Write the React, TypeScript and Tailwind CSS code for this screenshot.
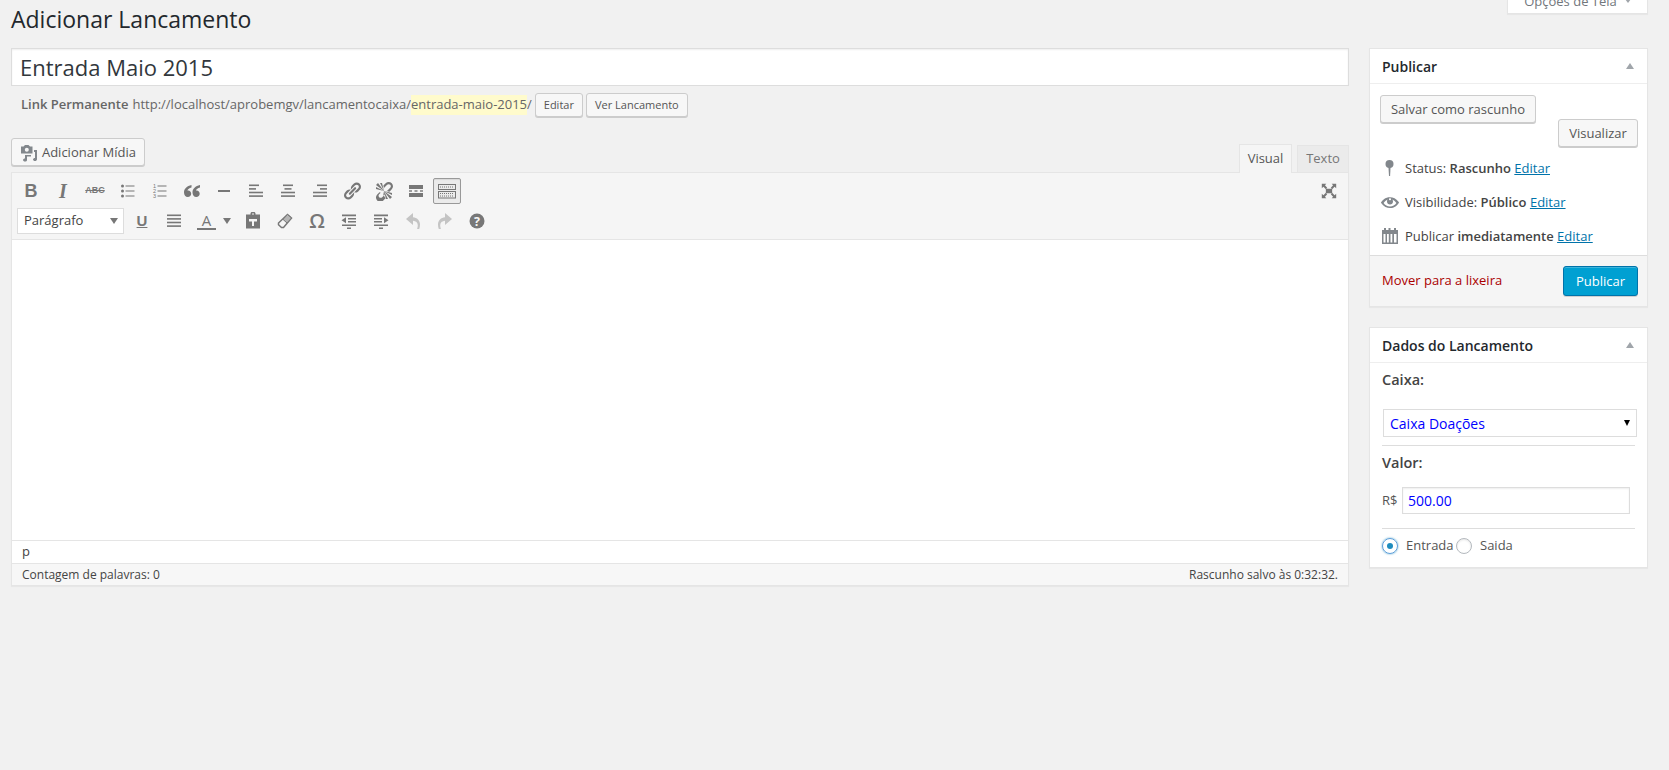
import React from "react";

const C = "#777";

function Svg({ children, s = 20 }: { children: React.ReactNode; s?: number }) {
  return (
    <svg width={s} height={s} viewBox="0 0 20 20" fill={C}>
      {children}
    </svg>
  );
}

function Btn({ children, w = "w-8" }: { children: React.ReactNode; w?: string }) {
  return <div className={`${w} h-[28px] flex items-center justify-center shrink-0 text-[#777]`}>{children}</div>;
}

function Lines({ rows }: { rows: [number, number][] }) {
  return (
    <Svg>
      {rows.map(([x, w], i) => (
        <rect key={i} x={x} y={3.5 + i * 3.6} width={w} height="1.6" />
      ))}
    </Svg>
  );
}

const Ul = () => (
  <Svg>
    {[5, 10, 15].map((y) => (
      <g key={y}>
        <circle cx="4.5" cy={y} r="1.5" />
        <rect x="7.5" y={y - 0.5} width="9" height="1" />
      </g>
    ))}
  </Svg>
);

const Ol = () => (
  <Svg>
    {[1, 2, 3].map((n, i) => (
      <g key={n}>
        <text x="3" y={6.5 + i * 5} fontSize="5.5" fontFamily="Liberation Sans" fill={C}>
          {n}
        </text>
        <rect x="7.5" y={4.5 + i * 5} width="9" height="1" />
      </g>
    ))}
  </Svg>
);

const Quote = () => (
  <Svg>
    <path d="M9.500 4C5 5 2 7.500 2 11.500 2 14 3.500 16 5.800 16c2 0 3.400-1.400 3.400-3.300 0-1.900-1.300-3.200-3-3.200-.3 0-.5 0-.8.100.5-1.400 1.900-2.400 4.100-3z" />
    <path d="M18 4c-4.500 1-7.500 3.500-7.500 7.500 0 2.500 1.500 4.500 3.800 4.500 2 0 3.400-1.400 3.400-3.300 0-1.900-1.300-3.200-3-3.200-.3 0-.5 0-.8.100.5-1.400 1.900-2.400 4.100-3z" />
  </Svg>
);

const LinkIcon = () => (
  <Svg>
    <path d="M17.740 2.760c1.680 1.690 1.680 4.410 0 6.100l-1.530 1.520c-1.120 1.120-2.700 1.470-4.140 1.090l2.620-2.610.76-.77.76-.76c.84-.84.84-2.200 0-3.040-.84-.85-2.200-.85-3.040 0l-.77.76-3.380 3.380c-.37-1.440-.02-3.020 1.100-4.140l1.520-1.530c1.690-1.680 4.420-1.680 6.100 0zM8.590 13.430l5.340-5.340c.42-.42.42-1.100 0-1.520-.44-.43-1.130-.39-1.530 0l-5.330 5.340c-.42.42-.42 1.100 0 1.520.39.39 1.100.43 1.520 0zm-.76 2.290l4.140-4.150c.38 1.440.03 3.020-1.090 4.140l-1.520 1.530c-1.690 1.680-4.410 1.680-6.100 0-1.680-1.680-1.680-4.420 0-6.100l1.530-1.520c1.120-1.120 2.700-1.470 4.140-1.100l-4.140 4.150c-.85.84-.85 2.200 0 3.050.84.84 2.200.84 3.040 0z" />
  </Svg>
);

const UnlinkIcon = () => (
  <Svg>
    <path d="M17.740 2.260c1.680 1.690 1.680 4.410 0 6.100l-1.530 1.520c-.32.33-.69.58-1.080.77L13 10l1.690-1.640.76-.77.76-.76c.84-.84.84-2.200 0-3.040-.84-.85-2.200-.85-3.040 0l-.77.76-.76.76L10 7l-.65-2.140c.19-.38.45-.75.77-1.070l1.520-1.530c1.690-1.680 4.420-1.680 6.100 0zM2 4l8 6-6-8zm4-2l4 8-2-8H6zM2 6l8 4-8-2V6zm7.360 7.690L10 10l.71 3.640-.21.27-.76.76-.76.76-.77.77c-.84.84-2.200.84-3.040 0s-.84-2.200 0-3.050l.76-.76.76-.76L7.330 12l-1.830-.64c-.27.18-.53.39-.76.62l-1.530 1.520c-1.680 1.690-1.680 4.420 0 6.100 1.690 1.680 4.410 1.680 6.100 0l1.530-1.530c.23-.23.44-.49.62-.76zM18 14l-8-4 8 2v2zm-4 4l-4-8 2 8h2zm4-2l-8-6 6 8z" />
  </Svg>
);

const More = () => (
  <Svg>
    <rect x="3" y="4" width="14" height="4" />
    <rect x="3" y="9.300" width="3" height="1.400" />
    <rect x="8.500" y="9.300" width="3" height="1.400" />
    <rect x="14" y="9.300" width="3" height="1.400" />
    <rect x="3" y="12" width="14" height="4" />
  </Svg>
);

const Sink = () => (
  <svg width="20" height="20" viewBox="0 0 20 20" fill="none" stroke={C}>
    <rect x="1.500" y="3.500" width="17" height="5" />
    <rect x="1.500" y="10.500" width="17" height="6.500" />
    <path d="M3 6h14M3 12.500h14M3 15h14" strokeDasharray="1 1" strokeWidth="1.200" />
  </svg>
);

const Paste = () => (
  <Svg>
    <path d="M7.500 3.500V2.500C7.500 1.700 8.200 1 9 1h2c.8 0 1.500.7 1.500 1.500v1H17v14H3v-14zM9 2.500v1h2v-1zM6 8v2.500h3V15h2v-4.500h3V8z" fillRule="evenodd" />
  </Svg>
);

const Eraser = () => (
  <svg width="20" height="20" viewBox="0 0 20 20" fill="none" stroke={C} strokeWidth="1.500">
    <path d="M12.500 3.500l4 3.500-8 9.500H6.500l-3-2.800V12z" />
    <path d="M12.500 3.500l4 3.500-4.500 5-4-3.600z" fill="#b5b5b5" strokeWidth="1" />
  </svg>
);

const Outdent = () => (
  <Svg>
    <path d="M3 3.500h14v1.800H3zM9 7h8v1.600H9zM9 10h8v1.600H9zM3 13.500h14v1.600H3zM8 16.500h4V18H8z" />
    <path d="M7 6.200v6L2.500 9.200z" />
  </Svg>
);

const Indent = () => (
  <Svg>
    <path d="M3 3.500h14v1.800H3zM3 7h8v1.600H3zM3 10h8v1.600H3zM3 13.500h14v1.600H3zM8 16.500h4V18H8z" />
    <path d="M13 6.200v6l4.500-3z" />
  </Svg>
);

const Undo = () => (
  <svg width="20" height="20" viewBox="0 0 20 20" fill="#c4c4c4">
    <path d="M10 2v4.200c4 .3 7 3 7 7.300 0 1.500-.2 3-.8 4.500h-2.100c.5-1.200.7-2.500.7-3.700 0-2.800-1.900-4.400-4.800-4.600V14L3 8z" />
  </svg>
);

const Redo = () => (
  <svg width="20" height="20" viewBox="0 0 20 20" fill="#c4c4c4">
    <path d="M10 2v4.200C6 6.500 3 9.200 3 13.500c0 1.500.2 3 .8 4.500h2.100c-.5-1.200-.7-2.500-.7-3.700 0-2.800 1.900-4.400 4.800-4.600V14l7-6z" />
  </svg>
);

const Help = () => (
  <svg width="20" height="20" viewBox="0 0 20 20">
    <circle cx="10" cy="10" r="7.500" fill={C} />
    <text x="10" y="14.500" textAnchor="middle" fontSize="12.500" fontWeight="700" fontFamily="Open Sans" fill="#f5f5f5">
      ?
    </text>
  </svg>
);

const Full = () => (
  <svg width="18" height="18" viewBox="0 0 20 20" fill={C}>
    <rect x="6.500" y="7.500" width="7" height="5" />
    <path d="M2 2h5L5.500 3.700 8 6.500 6.500 8 3.800 5.400 2 7zM18 2h-5l1.500 1.700L12 6.500 13.500 8l2.700-2.600L18 7zM2 18h5l-1.500-1.700L8 13.500 6.500 12l-2.700 2.600L2 13zM18 18h-5l1.500-1.700-2.500-2.800 1.500-1.500 2.700 2.600L18 13z" />
  </svg>
);

const Media = () => (
  <svg width="18" height="18" viewBox="0 0 18 18" fill="#82878c">
    <path d="M1 2.500h2.500L5 1h3.500L10 2.500h2.500v7H1zM6.800 3.800a2 2 0 1 0 0 4 2 2 0 0 0 0-4z" fillRule="evenodd" />
    <path d="M14 6h3v9.200c0 1-.9 1.800-2 1.800s-2-.6-2-1.500.9-1.600 2-1.600V8h-1zM5 11h6v1.500H7v3.400c0 .9-.9 1.600-2 1.600s-2-.6-2-1.500.9-1.600 2-1.600z" />
  </svg>
);

const PinIcon = () => (
  <svg width="20" height="20" viewBox="0 0 20 20" fill="#82878c">
    <circle cx="9.500" cy="6" r="4" />
    <path d="M8.400 8h2.200l-.5 10H9z" />
  </svg>
);

const EyeIcon = () => (
  <svg width="20" height="20" viewBox="0 0 20 20" fill="#82878c">
    <path d="M18.300 9.500C15 4.900 8.500 3.800 3.900 7.200c-1.200.9-2.200 2.100-3 3.400.2.400.5.800.8 1.200 3.300 4.600 9.600 5.600 14.200 2.400.9-.7 1.700-1.400 2.400-2.400.3-.4.500-.8.800-1.200-.3-.4-.5-.7-.8-1.100zm-8.300-3.300c.6 0 1 .4 1 1s-.4 1-1 1-1-.4-1-1 .4-1 1-1zm0 8.300C7.400 14.500 5 13.100 3.600 11 4.600 9.500 6 8.300 7.600 7.500c-.4.500-.6 1.200-.6 1.900 0 1.700 1.300 3 3 3s3-1.300 3-3c0-.7-.2-1.400-.6-2 1.600.8 3 2 4 3.500-1.400 2.200-3.800 3.500-6.400 3.600z" />
  </svg>
);

const CalIcon = () => (
  <svg width="20" height="20" viewBox="0 0 20 20" fill="#82878c">
    <path d="M2 4h2V2h2v2h2.500V2h2v2H14V2h2v2h2v14H2zM3.500 8v8.500h2V8zM7 8v8.500h1.800V8zM10.500 8v8.500h1.800V8zM14 8v8.500h2.500V8z" fillRule="evenodd" />
  </svg>
);

function WpButton({ children, className = "" }: { children: React.ReactNode; className?: string }) {
  return (
    <div
      className={`flex items-center justify-center border border-[#cccccc] rounded-[3px] bg-[#f7f7f7] text-[#555] shadow-[0_1px_0_#cccccc] shrink-0 ${className}`}
    >
      {children}
    </div>
  );
}

function BoxHead({ title }: { title: string }) {
  return (
    <div className="h-[35px] flex items-center justify-between pl-[12px] pr-[13px] border-b border-[#eeeeee]">
      <span className="text-[14px] font-semibold text-[#23282d]">{title}</span>
      <span className="w-0 h-0 border-x-[4px] border-x-transparent border-b-[6px] border-b-[#a0a5aa]" />
    </div>
  );
}

function MetaRow({ icon, children }: { icon: React.ReactNode; children: React.ReactNode }) {
  return (
    <div className="h-[34px] flex items-center gap-[5px] text-[13px] text-[#444]">
      <div className="w-[20px] flex justify-center shrink-0">{icon}</div>
      <div className="pt-[2px]">{children}</div>
    </div>
  );
}

const Edit = () => <span className="text-[#0073aa] underline">Editar</span>;

export default function App() {
  return (
    <div className="h-[770px] overflow-hidden bg-[#f1f1f1] pl-[11px] pr-[21px] font-['Open_Sans',sans-serif] text-[13px] text-[#444]">
      <div className="h-[48px] flex justify-between items-start">
        <h1 className="text-[23px] leading-[29px] mt-[5px] text-[#23282d] font-normal">Adicionar Lancamento</h1>
        <div className="w-[141px] h-[14px] flex items-end justify-center gap-[8px] bg-white border-x border-b border-[#e5e5e5] shadow-[0_1px_1px_rgba(0,0,0,0.04)] overflow-hidden text-[#72777c]">
          <span className="leading-[20px] mb-[2px] whitespace-nowrap">Opções de Tela</span>
          <span className="w-0 h-0 mb-[10px] border-x-[3px] border-x-transparent border-t-[4px] border-t-[#a0a5aa]" />
        </div>
      </div>

      <div className="flex gap-[20px] items-start">
        <main className="w-[1338px] shrink-0">
          <div className="h-[38px] flex items-center px-[8px] bg-white border border-[#dddddd] text-[22px] text-[#32373c] shadow-[inset_0_1px_2px_rgba(0,0,0,0.07)]">
            Entrada Maio 2015
          </div>

          <div className="mt-[7px] h-[24px] pl-[10px] flex items-center text-[13px] text-[#666]">
            <b className="font-semibold mr-[4px]">Link Permanente</b>
            <span>http://localhost/aprobemgv/lancamentocaixa/</span>
            <span className="bg-[#fffbcc]">entrada-maio-2015</span>
            <span>/</span>
            <WpButton className="h-[24px] w-[48px] ml-[3px] text-[11px]">Editar</WpButton>
            <WpButton className="h-[24px] w-[102px] ml-[3px] text-[11px]">Ver Lancamento</WpButton>
          </div>

          <div className="mt-[20px] h-[35px] flex justify-between items-start">
            <WpButton className="w-[134px] h-[28px] mt-[1px] gap-[4px] pt-[1px]">
              <Media />
              <span>Adicionar Mídia</span>
            </WpButton>
            <div className="flex items-end self-end gap-[5px] relative top-[1px]">
              <div className="w-[53px] h-[29px] flex items-center justify-center bg-[#f5f5f5] border border-b-0 border-[#e5e5e5] text-[#555]">
                Visual
              </div>
              <div className="w-[52px] h-[28px] flex items-center justify-center bg-[#ebebeb] border border-[#e5e5e5] text-[#777]">
                Texto
              </div>
            </div>
          </div>

          <div className="bg-white border border-[#e5e5e5] shadow-[0_1px_1px_rgba(0,0,0,0.04)]">
            <div className="h-[67px] bg-[#f5f5f5] border-b border-[#e5e5e5] pl-[4px] pr-[3px] pt-[4px]">
              <div className="flex justify-between">
                <div className="flex items-center">
                  <Btn><span className="font-['Liberation_Sans'] font-bold text-[18px] -ml-[2px]">B</span></Btn>
                  <Btn><span className="font-['Liberation_Serif'] font-bold italic text-[20px] -ml-[2px]">I</span></Btn>
                  <Btn><span className="font-['Liberation_Sans'] font-bold text-[9px] line-through -ml-[2px]">ABC</span></Btn>
                  <Btn><Ul /></Btn>
                  <Btn><Ol /></Btn>
                  <Btn><Quote /></Btn>
                  <Btn><Svg><rect x="4" y="9" width="12" height="2" /></Svg></Btn>
                  <Btn><Lines rows={[[3, 10], [3, 7], [3, 14], [3, 14]]} /></Btn>
                  <Btn><Lines rows={[[5, 10], [6.5, 7], [3, 14], [3, 14]]} /></Btn>
                  <Btn><Lines rows={[[7, 10], [10, 7], [3, 14], [3, 14]]} /></Btn>
                  <Btn><LinkIcon /></Btn>
                  <Btn><UnlinkIcon /></Btn>
                  <Btn><More /></Btn>
                  <Btn>
                    <div className="w-[28px] h-[26px] -translate-x-px flex items-center justify-center border border-[#999] rounded-[2px] bg-[#ebebeb] shadow-[inset_0_1px_1px_rgba(0,0,0,0.08)]">
                      <Sink />
                    </div>
                  </Btn>
                </div>
                <Btn><Full /></Btn>
              </div>
              <div className="flex items-center mt-[2px]">
                <div className="w-[107px] h-[26px] ml-[1px] mr-[2px] flex items-center justify-between pl-[6px] pr-[5px] bg-white border border-[#dddddd] text-[13px] text-[#444] shrink-0">
                  <span>Parágrafo</span>
                  <span className="w-0 h-0 border-x-[4px] border-x-transparent border-t-[6px] border-t-[#777]" />
                </div>
                <Btn><span className="font-['Liberation_Sans'] font-bold text-[15px] underline">U</span></Btn>
                <Btn><Lines rows={[[3, 14], [3, 14], [3, 14], [3, 14]]} /></Btn>
                <div className="w-[47px] h-[28px] flex items-center shrink-0">
                  <div className="w-[32px] flex flex-col items-center pl-[1px]">
                    <span className="font-['Open_Sans'] text-[15px] leading-[16px] text-[#777]">A</span>
                    <span className="w-[19px] h-[2.5px] bg-[#777]" />
                  </div>
                  <span className="w-0 h-0 ml-[1px] border-x-[4px] border-x-transparent border-t-[6px] border-t-[#777]" />
                </div>
                <Btn><Paste /></Btn>
                <Btn><Eraser /></Btn>
                <Btn><span className="font-['Open_Sans'] text-[20px] font-semibold">Ω</span></Btn>
                <Btn><Outdent /></Btn>
                <Btn><Indent /></Btn>
                <Btn><Undo /></Btn>
                <Btn><Redo /></Btn>
                <Btn><Help /></Btn>
              </div>
            </div>
            <div className="h-[300px]" />
            <div className="h-[23px] border-t border-[#e5e5e5] pl-[10px] flex items-center text-[13px] text-[#444]">p</div>
            <div className="h-[22px] border-t border-[#e5e5e5] bg-[#f7f7f7] pl-[10px] pr-[10px] flex items-center justify-between text-[12px] text-[#444]">
              <span>Contagem de palavras: 0</span>
              <span>Rascunho salvo às 0:32:32.</span>
            </div>
          </div>
        </main>

        <aside className="w-[279px] shrink-0">
          <section className="bg-white border border-[#e5e5e5] shadow-[0_1px_1px_rgba(0,0,0,0.04)]">
            <BoxHead title="Publicar" />
            <div className="h-[67px] pl-[10px] pr-[9px] pt-[11px]">
              <WpButton className="w-[156px] h-[28px] pt-[1px]">Salvar como rascunho</WpButton>
              <div className="flex justify-end -mt-[4px]">
                <WpButton className="w-[80px] h-[28px] pt-[1px]">Visualizar</WpButton>
              </div>
            </div>
            <div className="pl-[10px] pb-[2px]">
              <MetaRow icon={<PinIcon />}>
                Status: <b className="font-semibold">Rascunho</b> <Edit />
              </MetaRow>
              <MetaRow icon={<EyeIcon />}>
                Visibilidade: <b className="font-semibold">Público</b> <Edit />
              </MetaRow>
              <MetaRow icon={<CalIcon />}>
                Publicar <b className="font-semibold">imediatamente</b> <Edit />
              </MetaRow>
            </div>
            <div className="h-[51px] bg-[#f5f5f5] border-t border-[#dddddd] pl-[12px] pr-[9px] flex items-center justify-between">
              <span className="text-[#a00]">Mover para a lixeira</span>
              <div className="w-[75px] h-[30px] pt-[1px] flex items-center justify-center rounded-[3px] bg-[#00a0d2] border border-[#0073aa] text-white shadow-[inset_0_1px_0_rgba(120,200,230,0.5),0_1px_0_rgba(0,0,0,0.15)]">
                Publicar
              </div>
            </div>
          </section>

          <section className="mt-[20px] h-[241px] bg-white border border-[#e5e5e5] shadow-[0_1px_1px_rgba(0,0,0,0.04)]">
            <BoxHead title="Dados do Lancamento" />
            <div className="px-[12px]">
              <div className="mt-[7px] h-[20px] flex items-center text-[14.5px] font-semibold text-[#444]">Caixa:</div>
              <div className="mt-[19px] ml-[1px] h-[28px] w-[254px] flex items-center justify-between pl-[6px] pr-[6px] border border-[#dddddd] text-[14px] text-[#0000ff]">
                <span>Caixa Doações</span>
                <span className="w-0 h-0 border-x-[3px] border-x-transparent border-t-[6px] border-t-[#000]" />
              </div>
              <div className="mt-[8px] border-t border-[#dddddd]" />
              <div className="mt-[7px] h-[20px] flex items-center text-[14.5px] font-semibold text-[#444]">Valor:</div>
              <div className="mt-[14px] h-[27px] flex items-center">
                <span className="w-[20px] text-[13px] text-[#555]">R$</span>
                <div className="w-[228px] h-[27px] flex items-center pl-[5px] border border-[#dddddd] text-[14px] text-[#0000ff] shadow-[inset_0_1px_2px_rgba(0,0,0,0.07)]">
                  500.00
                </div>
              </div>
              <div className="mt-[14px] border-t border-[#dddddd]" />
              <div className="mt-[8px] flex items-center h-[18px] text-[13px] text-[#555]">
                <span className="w-[16px] h-[16px] rounded-full border border-[#5b9dd9] shadow-[0_0_2px_rgba(30,140,190,0.8)] flex items-center justify-center">
                  <span className="w-[6px] h-[6px] rounded-full bg-[#1e8cbe]" />
                </span>
                <span className="ml-[8px] w-[50px]">Entrada</span>
                <span className="w-[16px] h-[16px] rounded-full border border-[#b4b9be] bg-white shadow-[inset_0_1px_2px_rgba(0,0,0,0.1)]" />
                <span className="ml-[8px]">Saida</span>
              </div>
            </div>
          </section>
        </aside>
      </div>
    </div>
  );
}
